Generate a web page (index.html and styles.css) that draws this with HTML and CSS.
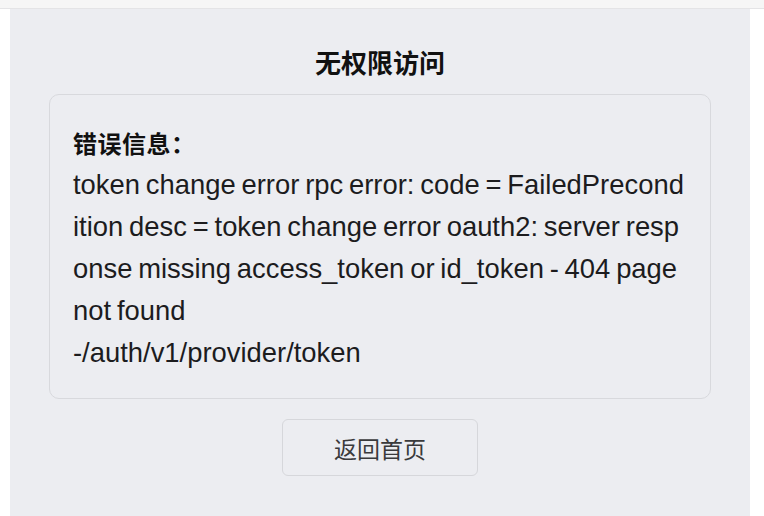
FILE: index.html
```html
<!DOCTYPE html>
<html lang="zh">
<head>
<meta charset="utf-8">
<link rel="stylesheet" href="styles.css">
</head>
<body>
<div class="topbar"></div>
<main class="panel">
  <h1 class="title">无权限访问</h1>
  <section class="card">
    <div class="label">错误信息：</div>
    <div class="msg">token change error rpc error: code = FailedPrecond<br>ition desc = token change error oauth2: server resp<br>onse missing access_token or id_token - 404 page<br>not found</div>
    <div class="msg">-/auth/v1/provider/token</div>
  </section>
  <div class="actions">
    <button class="btn">返回首页</button>
  </div>
</main>
</body>
</html>
```
FILE: styles.css
```css
html, body {
  margin: 0;
  padding: 0;
  background: #ffffff;
  font-family: "Liberation Sans", Arial, "Noto Sans CJK SC", sans-serif;
  color: #1c1c1e;
}
.topbar {
  height: 8px;
  background: #f6f6f6;
  border-bottom: 1px solid #e4e4e6;
}
.panel {
  width: 740px;
  margin-left: 10px;
  box-sizing: border-box;
  padding: 35px 39px 40px;
  background: #ecedf1;
  min-height: 507px;
}
.title {
  margin: 0;
  text-align: center;
  font-size: 26px;
  line-height: 36px;
  font-weight: bold;
  font-family: "Noto Sans CJK SC", sans-serif;
  color: #111;
}
.card {
  margin-top: 14px;
  border: 1px solid #d8d9dd;
  border-radius: 10px;
  padding: 27px 18px 24px 23px;
  background: #ecedf1;
}
.label {
  font-family: "Noto Sans CJK SC", sans-serif;
  font-weight: bold;
  font-size: 24px;
  line-height: 42px;
  letter-spacing: 0.5px;
  color: #111;
}
.msg {
  font-size: 27.4px;
  line-height: 42px;
  word-spacing: -1.8px;
  white-space: nowrap;
  color: #1c1c1e;
}
.actions {
  display: flex;
  justify-content: center;
  margin-top: 20px;
}
.btn {
  width: 196px;
  height: 57px;
  border: 1px solid #d6d7db;
  border-radius: 6px;
  background: #ecedf1;
  font-family: "Noto Sans CJK SC", sans-serif;
  font-size: 23px;
  color: #3a3a3c;
  padding: 0;
}
```
